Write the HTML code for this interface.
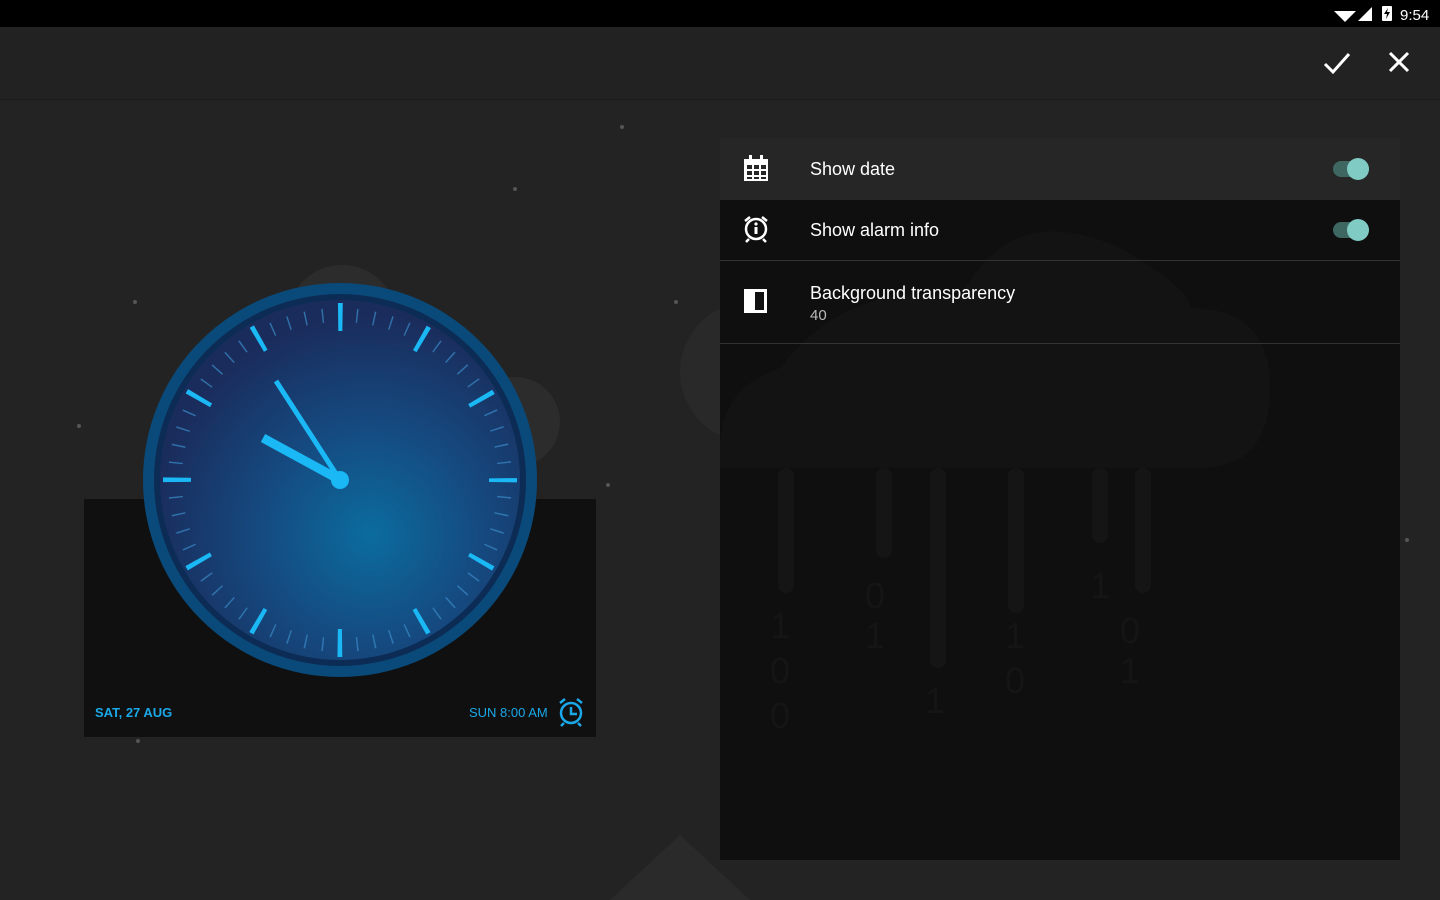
<!DOCTYPE html>
<html><head><meta charset="utf-8"><style>
*{margin:0;padding:0;box-sizing:border-box}
body{width:1440px;height:900px;overflow:hidden;background:#232323;font-family:"Liberation Sans",sans-serif;position:relative}
.status{position:absolute;left:0;top:0;width:1440px;height:27px;background:#000}
.toolbar{position:absolute;left:0;top:27px;width:1440px;height:73px;background:#222;border-bottom:1px solid #1c1c1c}
.panel{position:absolute;left:720px;top:138px;width:680px;height:722px;background:#0f0f0f}
.row{position:absolute;left:0;width:680px;color:#fff;font-size:18px}
.row .t{position:absolute;left:90px}
.sw{position:absolute;left:613px;width:36px;height:16px;border-radius:8px;background:#3f6762}
.sw::after{content:"";position:absolute;left:14px;top:-3px;width:22px;height:22px;border-radius:50%;background:#80cbc4}
.dot{position:absolute;width:4px;height:4px;border-radius:50%;background:#555}
</style></head><body>
<div class="status">
<svg width="140" height="27" style="position:absolute;left:1300px;top:0">
<path d="M34 11 L56 11 L45 22 Z" fill="#fff"/>
<path d="M58 21 L72 7 L72 21 Z" fill="#fff"/>
<rect x="82" y="6" width="10" height="15" rx="1" fill="#fff"/>
<path d="M88 8 L84 14 L87 14 L86 19 L90 12 L87 12 Z" fill="#000"/>
<text x="100" y="20" fill="#fff" font-size="15" font-family="Liberation Sans">9:54</text>
</svg>
</div>
<div class="toolbar">
<svg width="140" height="73" style="position:absolute;left:1300px;top:0">
<path d="M25 37 L33 45 L49 27" stroke="#fff" stroke-width="3" fill="none"/>
<path d="M90 26 L108 44 M108 26 L90 44" stroke="#fff" stroke-width="3"/>
</svg>
</div>
<div class="dot" style="left:620px;top:125px"></div><div class="dot" style="left:513px;top:187px"></div>
<div class="dot" style="left:133px;top:300px"></div><div class="dot" style="left:77px;top:424px"></div>
<div class="dot" style="left:606px;top:483px"></div><div class="dot" style="left:136px;top:739px"></div>
<div class="dot" style="left:674px;top:300px"></div><div class="dot" style="left:1405px;top:538px"></div>
<svg width="1440" height="900" style="position:absolute;left:0;top:0">
<circle cx="342" cy="320" r="55" fill="#2c2c2c"/>
<circle cx="515" cy="422" r="45" fill="#2c2c2c"/>
<circle cx="750" cy="372" r="70" fill="#292929"/>
<rect x="84" y="499" width="512" height="238" fill="#101010"/>
<path d="M610 900 L680 835 L750 900Z" fill="#2a2a2a"/>
</svg>
<svg width="1440" height="900" style="position:absolute;left:0;top:0">
<defs>
<radialGradient id="f" cx="370" cy="535" r="220" gradientUnits="userSpaceOnUse">
<stop offset="0" stop-color="#0b6c9e"/><stop offset="0.5" stop-color="#154a80"/><stop offset="1" stop-color="#1a2c5c"/>
</radialGradient>
</defs>
<circle cx="340" cy="480" r="197" fill="#0a4a7a"/>
<circle cx="340" cy="480" r="186" fill="#0c2c55"/>
<circle cx="340" cy="480" r="180" fill="url(#f)"/>
<circle cx="340" cy="480" r="165" fill="none" stroke="#3a8ac8" stroke-opacity="0.7" stroke-width="14" stroke-dasharray="1.5 15.77" stroke-dashoffset="0.75"/>
<circle cx="340" cy="480" r="163" fill="none" stroke="#1ab8f5" stroke-width="28" stroke-dasharray="4.5 80.85" stroke-dashoffset="2.25"/>
<line x1="340" y1="480" x2="263" y2="438" stroke="#1ab8f5" stroke-width="9" stroke-linecap="butt"/>
<line x1="340" y1="480" x2="276" y2="381" stroke="#1ab8f5" stroke-width="5"/>
<circle cx="340" cy="480" r="9" fill="#1ab8f5"/>
<text x="95" y="717" fill="#1aa8e8" font-size="13" font-weight="bold" font-family="Liberation Sans">SAT, 27 AUG</text>
<text x="469" y="717" fill="#1aa8e8" font-size="13" font-family="Liberation Sans">SUN 8:00 AM</text>
<circle cx="571" cy="713" r="10" fill="none" stroke="#1aa8e8" stroke-width="2.5"/>
<path d="M571 707 V714 H577 M560 703 l5 -4 M582 703 l-5 -4 M564 723 l-3 3 M578 723 l3 3" stroke="#1aa8e8" stroke-width="2.5" fill="none"/>
</svg>
<div class="panel">
<svg width="680" height="722" style="position:absolute;left:0;top:0">
<path d="M0 310 Q0 250 60 230 Q130 140 240 160 Q290 60 400 110 Q470 150 470 170 Q550 170 550 250 Q550 330 480 330 L0 330Z" fill="#131313"/>
<g fill="#151515">
<rect x="58" y="330" width="16" height="125" rx="8"/><rect x="156" y="330" width="16" height="90" rx="8"/>
<rect x="210" y="330" width="16" height="200" rx="8"/><rect x="288" y="330" width="16" height="145" rx="8"/>
<rect x="372" y="330" width="16" height="75" rx="8"/><rect x="415" y="330" width="16" height="125" rx="8"/>
</g>
<g fill="#151515" font-size="36" font-family="Liberation Sans"><text x="50" y="500">1</text><text x="50" y="545">0</text><text x="50" y="590">0</text><text x="145" y="470">0</text><text x="145" y="510">1</text><text x="370" y="460">1</text><text x="400" y="505">0</text><text x="400" y="545">1</text><text x="205" y="575">1</text><text x="285" y="510">1</text><text x="285" y="555">0</text></g>
</svg>
<div class="row" style="top:0;height:62px;background:#262626">
<svg width="30" height="30" style="position:absolute;left:23px;top:16px"><rect x="1" y="5" width="24" height="22" fill="#fff"/><rect x="6" y="1" width="3" height="6" fill="#fff"/><rect x="17" y="1" width="3" height="6" fill="#fff"/><g fill="#262626"><rect x="4" y="11" width="5" height="4"/><rect x="11" y="11" width="5" height="4"/><rect x="18" y="11" width="5" height="4"/><rect x="4" y="17" width="5" height="4"/><rect x="11" y="17" width="5" height="4"/><rect x="18" y="17" width="5" height="4"/><rect x="4" y="23" width="5" height="2"/><rect x="11" y="23" width="5" height="2"/><rect x="18" y="23" width="5" height="2"/></g></svg>
<span class="t" style="top:21px">Show date</span><div class="sw" style="top:23px"></div></div>
<div class="row" style="top:62px;height:61px;border-bottom:1px solid #333">
<svg width="30" height="30" style="position:absolute;left:23px;top:15px"><circle cx="13" cy="14" r="10" fill="none" stroke="#fff" stroke-width="2.5"/><path d="M2 6 L7 2 M24 6 L19 2 M6 24 l-3 3 M20 24 l3 3" stroke="#fff" stroke-width="2.5"/><rect x="11.5" y="12" width="3" height="7" fill="#fff"/><circle cx="13" cy="9" r="1.6" fill="#fff"/></svg>
<span class="t" style="top:20px">Show alarm info</span><div class="sw" style="top:22px"></div></div>
<div class="row" style="top:124px;height:82px;border-bottom:1px solid #333">
<svg width="30" height="30" style="position:absolute;left:23px;top:26px"><rect x="1" y="1" width="23" height="24" fill="#fff"/><rect x="12" y="4" width="9" height="18" fill="#111"/></svg>
<span class="t" style="top:21px">Background transparency</span>
<span class="t" style="top:45px;font-size:15px;color:#bbb">40</span></div>
</div>
</body></html>
